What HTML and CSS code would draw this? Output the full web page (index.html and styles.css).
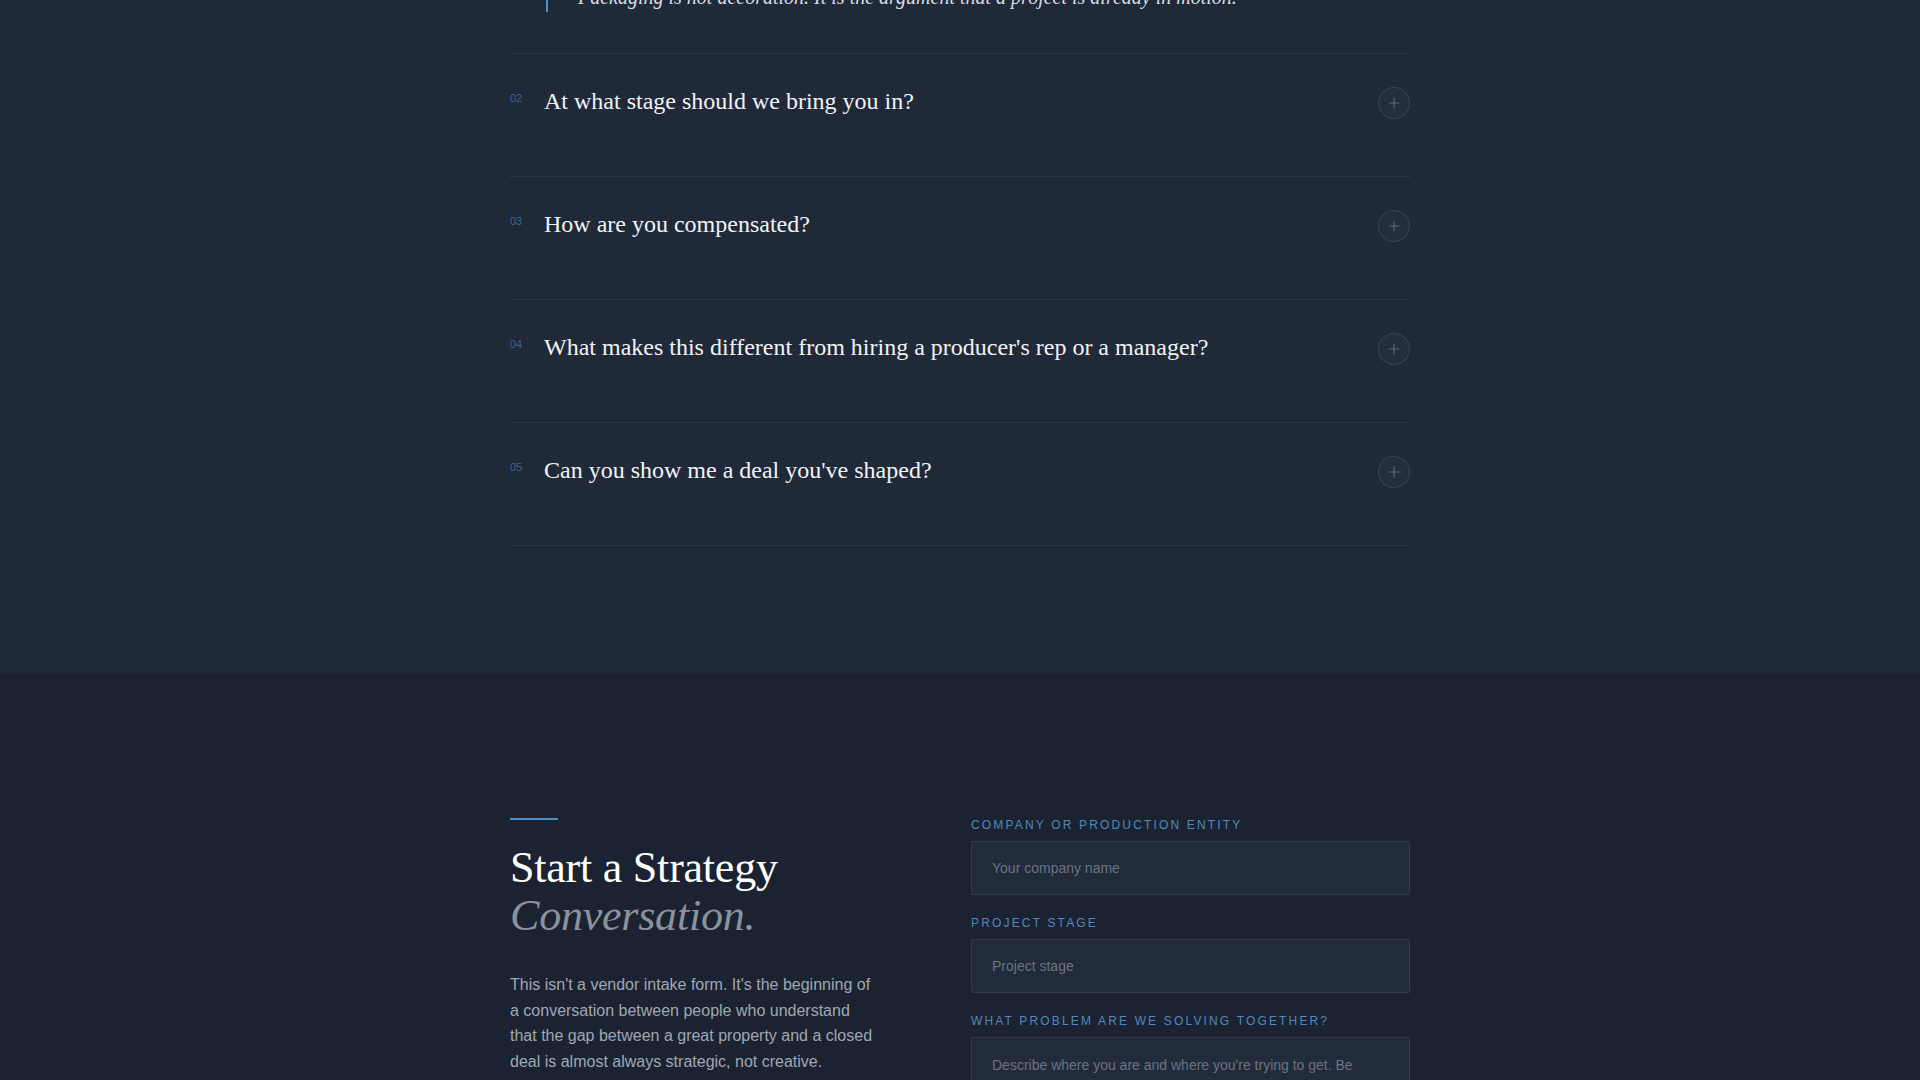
FILE: index.html
```html
<!DOCTYPE html>
<html lang="en">
<head>
<meta charset="utf-8">
<title>FAQ and Strategy Conversation</title>
<link rel="stylesheet" href="styles.css">
</head>
<body>
<section class="faq">
  <div class="container">
    <div class="faq-item faq-item--open">
      <div class="faq-answer">
        <blockquote class="faq-quote">Packaging is not decoration. It is the argument that a project is already in motion.</blockquote>
      </div>
    </div>
    <div class="faq-item">
      <button class="faq-question">
        <span class="faq-num">02</span>
        <span class="faq-text">At what stage should we bring you in?</span>
        <span class="faq-toggle"><svg viewBox="0 0 32 32" width="32" height="32"><path d="M16 10.5v11M10.5 16h11" /></svg></span>
      </button>
    </div>
    <div class="faq-item">
      <button class="faq-question">
        <span class="faq-num">03</span>
        <span class="faq-text">How are you compensated?</span>
        <span class="faq-toggle"><svg viewBox="0 0 32 32" width="32" height="32"><path d="M16 10.5v11M10.5 16h11" /></svg></span>
      </button>
    </div>
    <div class="faq-item">
      <button class="faq-question">
        <span class="faq-num">04</span>
        <span class="faq-text">What makes this different from hiring a producer's rep or a manager?</span>
        <span class="faq-toggle"><svg viewBox="0 0 32 32" width="32" height="32"><path d="M16 10.5v11M10.5 16h11" /></svg></span>
      </button>
    </div>
    <div class="faq-item">
      <button class="faq-question">
        <span class="faq-num">05</span>
        <span class="faq-text">Can you show me a deal you've shaped?</span>
        <span class="faq-toggle"><svg viewBox="0 0 32 32" width="32" height="32"><path d="M16 10.5v11M10.5 16h11" /></svg></span>
      </button>
    </div>
  </div>
</section>

<section class="contact">
  <div class="container contact-grid">
    <div class="contact-intro">
      <div class="accent-line"></div>
      <h2 class="contact-title">Start a Strategy<br><em>Conversation.</em></h2>
      <p class="contact-copy">This isn't a vendor intake form. It's the beginning of a conversation between people who understand that the gap between a great property and a closed deal is almost always strategic, not creative.</p>
    </div>
    <form class="contact-form">
      <label class="field">
        <span class="field-label">Company or Production Entity</span>
        <input class="field-input" type="text" placeholder="Your company name">
      </label>
      <label class="field">
        <span class="field-label">Project Stage</span>
        <input class="field-input" type="text" placeholder="Project stage">
      </label>
      <label class="field">
        <span class="field-label">What problem are we solving together?</span>
        <textarea class="field-input field-textarea" rows="5" placeholder="Describe where you are and where you're trying to get. Be specific about the problem."></textarea>
      </label>
    </form>
  </div>
</section>
</body>
</html>
```

FILE: styles.css
```css
* { box-sizing: border-box; }

html, body {
  margin: 0;
  padding: 0;
}

body {
  background: #1b2332;
  color: #e8ecf1;
  font-family: "Liberation Sans", Arial, sans-serif;
  overflow: hidden;
}

.container {
  width: 900px;
  margin: 0 auto;
}

/* FAQ */
.faq {
  background: #1f2938;
  padding-bottom: 128px;
}

.faq-item {
  border-bottom: 1px solid rgba(255, 255, 255, 0.07);
}

.faq-item--open {
  margin-top: -18px;
}

.faq-answer {
  padding: 0 0 41px 36px;
}

.faq-quote {
  margin: 0;
  border-left: 2px solid #4a8fd0;
  padding-left: 30px;
  font-family: "Liberation Serif", "Times New Roman", serif;
  font-style: italic;
  font-size: 20px;
  line-height: 30px;
  color: #d7dde5;
}

.faq-question {
  display: flex;
  align-items: flex-start;
  width: 100%;
  padding: 32px 0 57px;
  margin: 0;
  border: 0;
  background: none;
  text-align: left;
  color: inherit;
  cursor: pointer;
}

.faq-num {
  flex: 0 0 34px;
  padding-top: 6px;
  font-family: "Liberation Sans", Arial, sans-serif;
  font-size: 11px;
  line-height: 12px;
  color: #3f6487;
}

.faq-text {
  flex: 1;
  font-family: "Liberation Serif", "Times New Roman", serif;
  font-size: 24px;
  line-height: 30px;
  color: #f1f3f6;
}

.faq-toggle {
  flex: 0 0 32px;
  width: 32px;
  height: 32px;
  margin-top: 1px;
  border: 1px solid rgba(255, 255, 255, 0.1);
  border-radius: 50%;
  background: rgba(255, 255, 255, 0.025);
  display: flex;
  align-items: center;
  justify-content: center;
}

.faq-toggle svg {
  width: 30px;
  height: 30px;
}

.faq-toggle path {
  stroke: rgba(255, 255, 255, 0.28);
  stroke-width: 1.2;
  fill: none;
}

/* Contact */
.contact {
  background: #1b2332;
  padding: 143px 0 120px;
}

.contact-grid {
  display: grid;
  grid-template-columns: 1fr 439px;
  column-gap: 22px;
  align-items: start;
}

.accent-line {
  width: 48px;
  height: 2px;
  background: #4a8fd0;
  margin-top: 1px;
}

.contact-title {
  margin: 24px 0 0;
  font-family: "Liberation Serif", "Times New Roman", serif;
  font-weight: 400;
  font-size: 44px;
  line-height: 48.4px;
  letter-spacing: -0.005em;
  color: #ffffff;
}

.contact-title em {
  font-style: italic;
  color: #8b929c;
}

.contact-copy {
  margin: 31px 0 0;
  max-width: 366px;
  font-size: 16px;
  line-height: 25.7px;
  color: #a0a7b1;
}

.contact-form {
  display: flex;
  flex-direction: column;
  gap: 20px;
}

.field {
  display: flex;
  flex-direction: column;
  gap: 8px;
}

.field-label {
  font-size: 12px;
  line-height: 16px;
  font-weight: 400;
  letter-spacing: 0.18em;
  text-transform: uppercase;
  color: #5089bd;
}

.field-input {
  width: 100%;
  height: 54px;
  padding: 0 20px;
  background: #222b3b;
  border: 1px solid rgba(255, 255, 255, 0.08);
  border-radius: 2px;
  font-family: "Liberation Sans", Arial, sans-serif;
  font-size: 14px;
  color: #e8ecf1;
  outline: none;
}

.field-input::placeholder {
  color: #6b7380;
}

.field-textarea {
  height: 140px;
  padding: 16px 20px;
  line-height: 22px;
  resize: none;
}
```
